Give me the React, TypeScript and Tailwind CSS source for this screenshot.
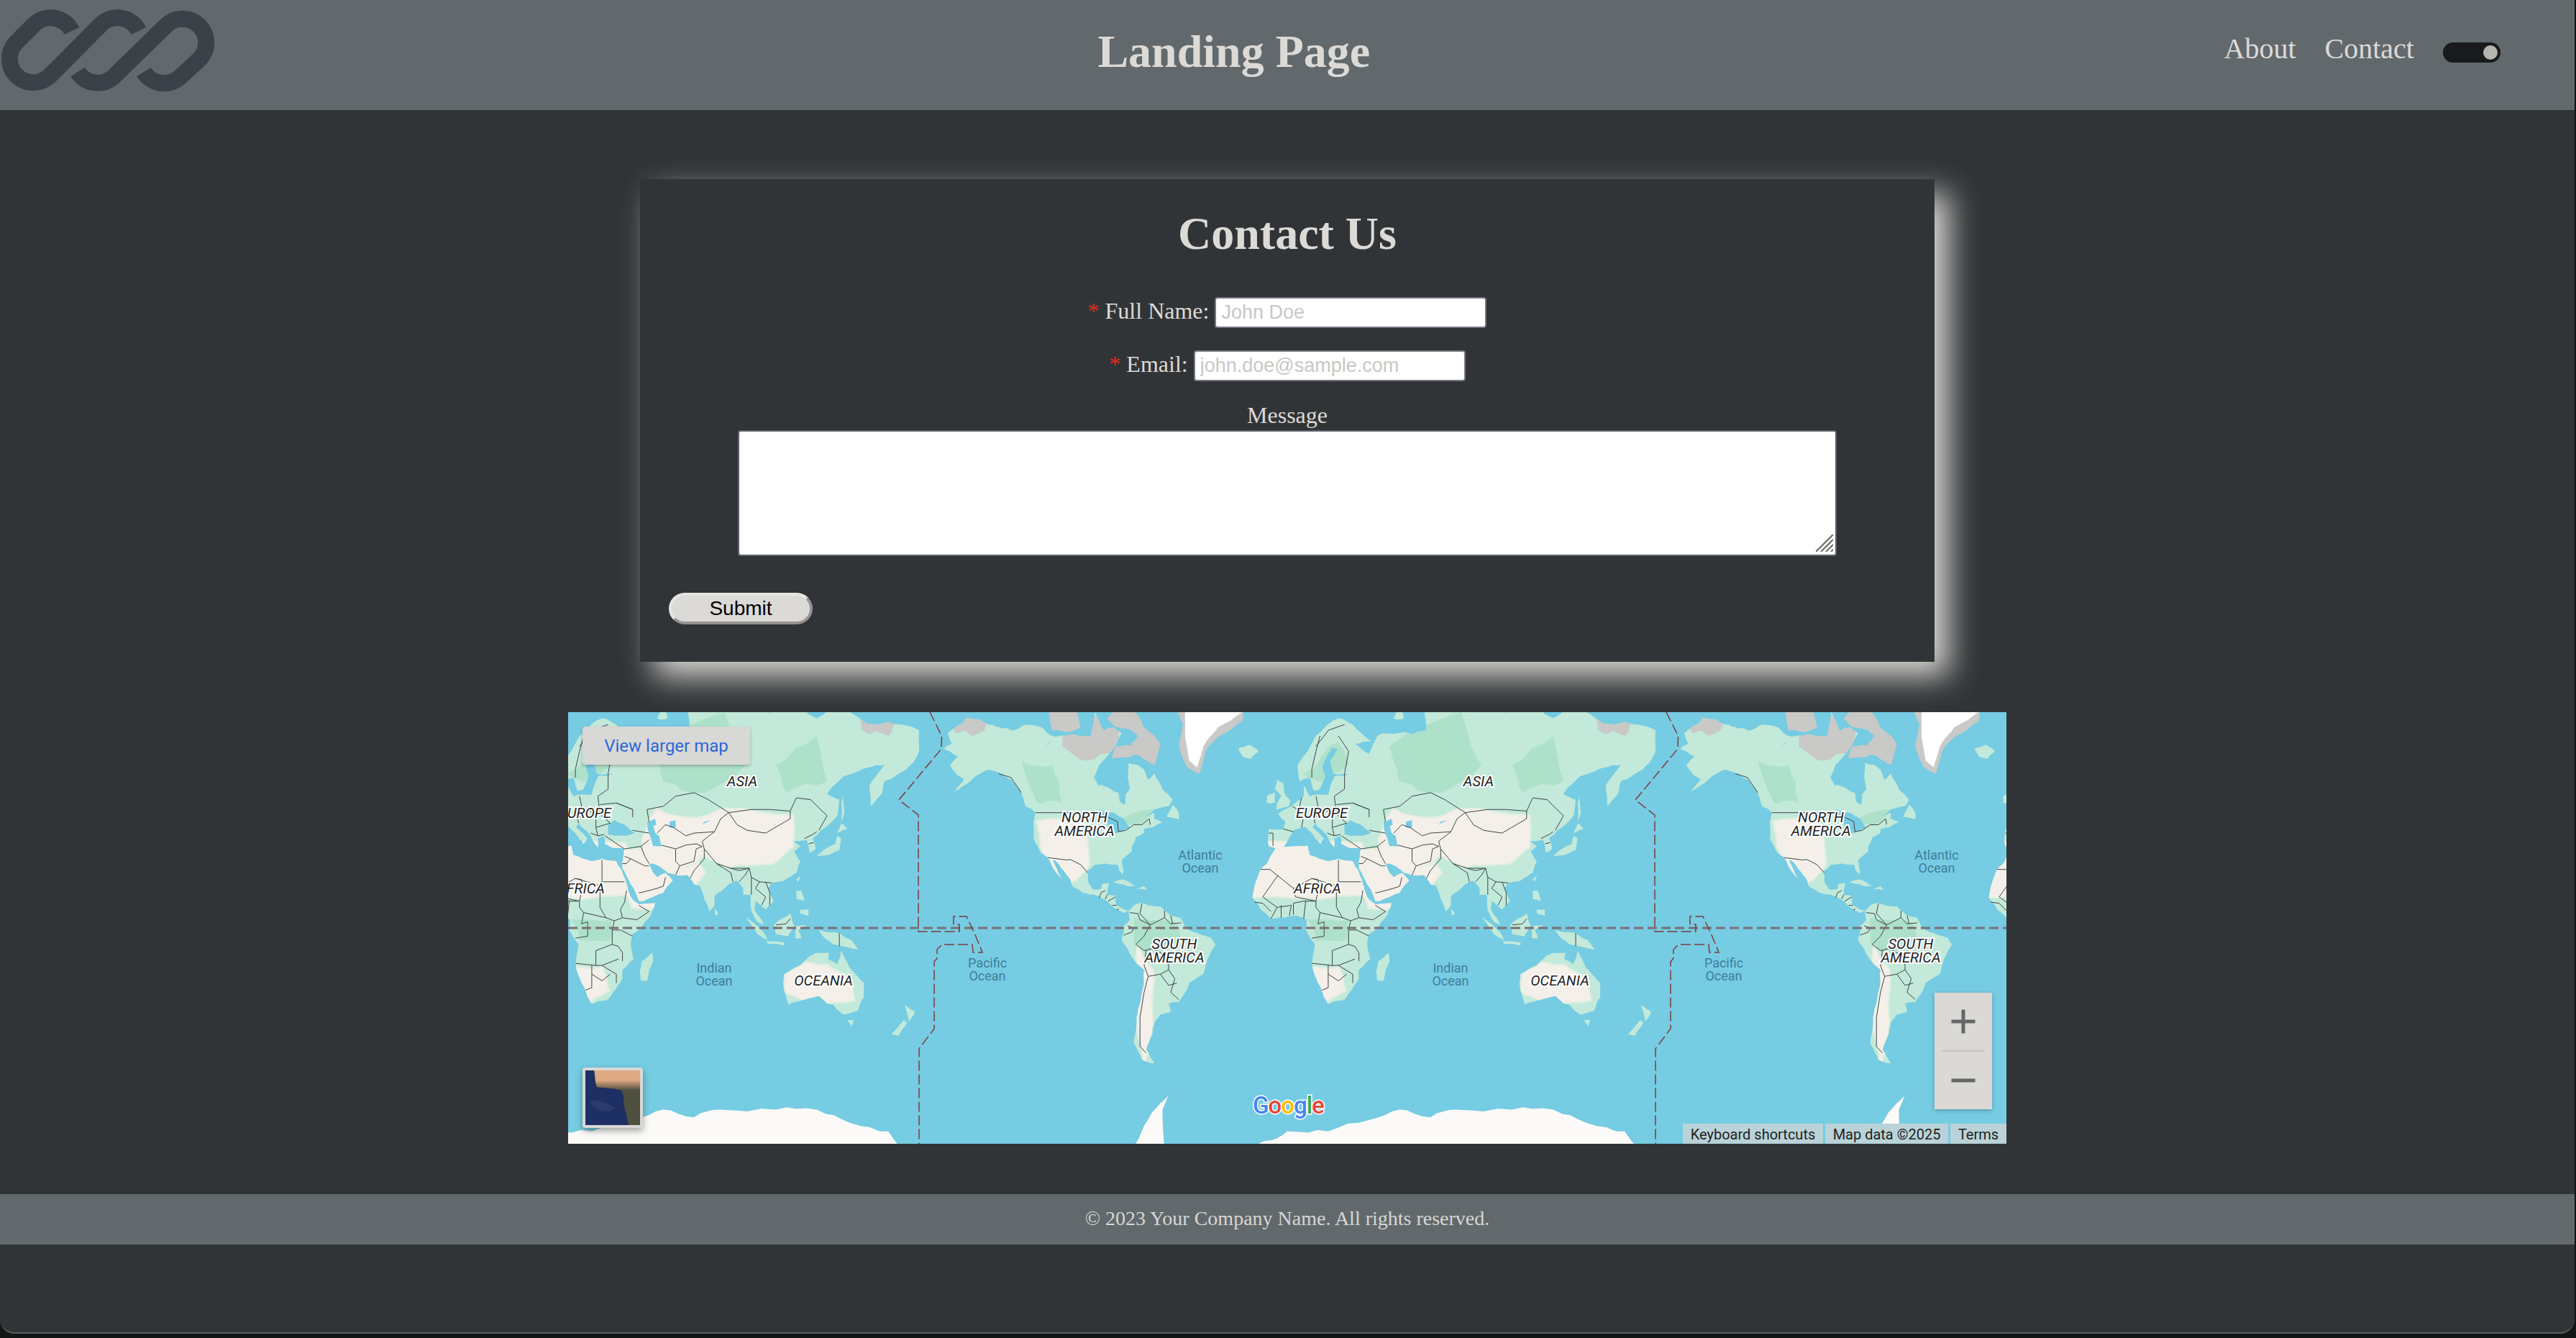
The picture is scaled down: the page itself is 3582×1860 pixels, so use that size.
const toPoint = ([lon, lat]: number[]) => {
  const x = 1000 + (lon / 360) * 1024;
  const clamped = Math.max(-85, Math.min(85, lat));
  const y = 300 - (Math.log(Math.tan(Math.PI / 4 + (clamped * Math.PI) / 360)) * 1024) / (2 * Math.PI);
  return `${x.toFixed(1)},${y.toFixed(1)}`;
};

// small repeatable wobble so the coasts and patches don't look like straight polygons
let seed = 7;
const rnd = () => {
  seed = (seed * 16807) % 2147483647;
  return seed / 2147483647 - 0.5;
};
const rough = (pts: number[][], amount: number, rounds = 2) => {
  let out = pts;
  for (let r = 0; r < rounds; r++) {
    const next: number[][] = [];
    out.forEach((p, i) => {
      const q = out[(i + 1) % out.length];
      const len = Math.min(10, Math.hypot(q[0] - p[0], q[1] - p[1]));
      next.push(p);
      next.push([(p[0] + q[0]) / 2 + rnd() * len * amount, (p[1] + q[1]) / 2 + rnd() * len * amount]);
    });
    out = next;
  }
  return out;
};
const poly = (pts: number[][]) => "M" + pts.map(toPoint).join("L") + "Z";
const line = (pts: number[][]) => "M" + pts.map(toPoint).join("L");
const roughPaths = (list: number[][][], amount: number) => list.map((p) => poly(rough(p, amount))).join("");

const land: number[][][] = [
  // north america
  [[-168,65.5],[-164,66.5],[-166,68.5],[-157,71],[-148,70.3],[-141,69.6],[-135,69],[-128,70],[-120,69.5],[-115,68],[-108,68],[-100,68],[-96,68],[-94,72],[-90,69],[-85,69.5],[-81,68.5],[-87,64.5],[-92,62],[-94.5,59],[-92.5,57],[-88,56.5],[-82.5,55],[-82,52.5],[-79.5,51.5],[-79,54.5],[-77,56],[-78,59],[-77.5,62.5],[-73,62],[-70,61],[-68,58.5],[-65,60],[-61,56],[-56,53],[-58,51],[-65,50],[-69,48],[-65,49],[-65,47],[-61,46],[-66,44],[-70,43.5],[-70,42],[-74,40.5],[-76,37],[-76,35],[-81,31.5],[-80,27],[-80.5,25],[-82,27],[-83,29.5],[-89,30],[-94,29.5],[-97.5,27],[-97.5,22],[-95,18.5],[-91,18.7],[-90.5,21],[-87,21.5],[-88,16],[-84,15.5],[-83.5,11],[-80,9],[-77.5,8.5],[-80,7.3],[-85,10],[-88,13],[-94,16],[-100,17],[-105,20],[-106,23],[-110,27.5],[-113,31],[-114.7,31.5],[-112,26],[-110,23],[-112,25],[-115,29],[-117,32.5],[-120.5,34.5],[-124,40],[-124,46],[-123,49],[-128,51],[-130,55],[-135,58.5],[-140,60],[-146,61],[-150,60],[-152,59.5],[-158,57],[-164,54.7],[-158,58.5],[-162,60],[-165,62],[-161,64]],
  // south america
  [[-77.5,8.5],[-75,11],[-71.5,12.3],[-68,11],[-62,10.5],[-57,6],[-52,5],[-50,0],[-44,-2.5],[-37,-5],[-35,-8],[-39,-15],[-41,-22],[-48,-26],[-49,-29],[-53,-34],[-58,-34.5],[-57,-38],[-62,-39],[-65,-42],[-66,-46],[-69,-51],[-65,-55],[-71,-54],[-75,-49],[-73.5,-42],[-73,-37],[-71,-30],[-70,-20],[-76,-14],[-81,-6],[-80,-2],[-80,1],[-77,4]],
  // africa
  [[-6,35.8],[3,37],[10,37.3],[11,33.5],[20,31],[25,32],[32,31],[34,28],[37,21],[39,15],[43,11.5],[51,12],[48,5],[40,-3],[39,-8],[40.5,-15],[35,-20],[35,-24],[32.8,-27],[28,-33],[20,-34.8],[18,-32],[15,-26],[12,-17],[13.5,-8],[9,-1],[9.5,4],[4,6],[-4,5],[-8,4.5],[-13,9],[-17,14.7],[-16,20],[-13,27.5],[-10,30]],
  // eurasia
  [[-9,37],[-9.5,39],[-9,43.5],[-2,43.5],[-1,46],[-4.5,48.5],[2,51],[8,54],[8,57],[11,54],[20,54.5],[23,59.3],[30,60],[22.5,60],[21,63],[25,65.5],[22,65.8],[17,61.5],[18.5,59.5],[16,56],[13,55.5],[11,59],[6,58],[5,62],[14,68],[25,71],[32,70],[41,67],[33,66.5],[40,64.5],[44,68],[54,68.5],[68,69],[67,72],[73,72],[80,72],[90,72],[105,77],[113,74],[130,71],[140,72.5],[160,70],[170,70],[180,69],[180,65],[177,62.5],[170,60],[163,58],[162,55],[156.5,51],[155.7,57],[163,62],[156,61.5],[143,59.3],[135,54.7],[141,53],[140,48],[132,43],[128,40],[129.5,36],[126.5,34.5],[126,37],[125,39.5],[121,39],[118,39],[122,37],[119,35],[122,31],[120,26],[114,22.5],[108,21.5],[106,19],[109,13],[105,9],[100,13],[99.5,9],[103,4],[104,1.5],[101,3],[98,8.5],[97.5,16],[94,16],[94,19],[91,22.5],[87,21],[80,15.5],[80,11],[77.5,8],[73,20],[70,21],[67,25],[61,25],[57,26],[56,27],[50,30],[48,30],[50,26],[52,24],[56,26],[59.5,22.5],[55,17],[45,13],[43,13],[39,21],[35,28],[35,31],[36,36],[30,36.5],[26.5,38],[26,40.8],[23,40],[23,36.5],[19.5,41],[13.5,45.5],[12.5,44],[18,40],[16,38],[12,42],[8.5,44.3],[3.5,43.2],[0,39],[-2,36.7],[-5.5,36]],
  // islands
  [[-5.5,50],[1,51.2],[1.5,52.8],[-1.5,55],[-2,57.5],[-5,58.5],[-6,56],[-3,54],[-5,52]],
  [[-10,52],[-6,52],[-6,55],[-10,54]],
  [[-24,65.5],[-18,66.3],[-14,65],[-18,63.4],[-22,64]],
  [[-59,47.7],[-53,46.8],[-53,49],[-56,51.5]],
  [[-85,22],[-80,23],[-74,20],[-78,20]],
  [[-74,18.5],[-68.5,18.5],[-70,20]],
  [[130,33],[135,33.5],[141,35.5],[142,40],[140,41],[139,38],[133,35.5]],
  [[140,42],[145,43.5],[142,45.5]],
  [[142,46],[143.5,49],[143,54],[142,52]],
  [[120,23],[122,25],[121,22]],
  [[120,18],[122.5,18],[124,13],[120,14]],
  [[122,9],[126,9],[126,6],[122,7]],
  [[95,5.5],[104,-2],[106,-6],[101,-3]],
  [[105.5,-6.5],[114,-7],[114,-8.5],[106,-7.7]],
  [[109,1.5],[117,7],[119,1],[116,-4],[110,-3]],
  [[120,1],[125,1.3],[121,-1],[122.5,-5],[119.5,-5]],
  [[131,-1],[141,-2.5],[147,-6],[150.5,-10.5],[143,-9],[138,-8],[133,-4]],
  [[114,-22],[122,-18],[126,-14],[130,-12],[136,-12],[135.5,-15],[140,-17.5],[142,-11],[146,-19],[153,-26],[153,-32],[150,-37.5],[143,-39],[138,-35],[135,-34.5],[131,-31.5],[124,-33],[116,-35],[115,-32],[113.5,-26]],
  [[145,-41],[148,-41],[147,-43.5]],
  [[173,-35],[178,-38],[175,-41.5],[174,-38]],
  [[172.5,-41],[174,-42],[170,-46.5],[166.5,-46]],
  [[49.5,-12],[50,-16],[47,-25],[44,-25],[43.5,-21],[44.5,-16]],
  [[80,9.5],[82,7],[80.5,6]],
  [[52,71],[56,73.5],[57,71]],
];

const grey: number[][][] = [
  [[-80,74],[-72,71],[-62,66.5],[-65,62],[-72,64],[-78,65],[-73,68],[-88,71]],
  [[-117,73],[-105,74],[-101,69.5],[-115,69]],
  [[-125,72],[-118,75],[-116,72]],
  [[-100,75],[-92,75],[-90,72.5],[-98,72]],
  [[-84,66],[-73,66],[-76,64],[-86,63.5]],
];

const seas: number[][][] = [
  [[28,41.5],[28,45],[31,46.5],[36,45],[41,42],[37,41],[31,41]],
  [[47,46],[51,47],[51.5,45],[50,44.5],[51,42],[53,41],[54,37],[50,37],[49,40],[47.5,43]],
  [[-92,50],[-85,49],[-80,47],[-77,43.8],[-83,42],[-87,42],[-88,46]],
  [[58,46],[61,46.5],[61,44],[58,44]],
  [[-118,66],[-116,67],[-120,65]],
  [[78,46.5],[75,46],[74,45]],
];

const beige: number[][][] = [
  [[-20,38],[36,38],[50,15],[30,16],[10,15],[-20,15]],
  [[34,35],[60,35],[60,10],[40,10]],
  [[52,50],[70,47],[85,50],[118,48],[118,37],[108,30],[100,30],[85,29],[75,34],[62,27],[45,28],[45,40]],
  [[115,-22],[125,-17],[135,-18],[146,-24],[148,-33],[130,-36],[115,-30]],
  [[-122,46],[-100,48],[-97,30],[-106,22],[-118,30]],
  [[-73,-10],[-66,-20],[-66,-42],[-70,-55],[-75,-40],[-73,-20]],
  [[12,-19],[25,-19],[28,-29],[16,-35]],
  [[60,26],[72,30],[75,26],[70,20]],
];

const deep: number[][][] = [
  [[50,66],[85,72],[95,62],[75,55],[55,58]],
  [[-75,5],[-55,3],[-52,-5],[-65,-12],[-75,-8]],
  [[10,4],[30,4],[30,-5],[14,-6]],
  [[-130,63],[-115,62],[-110,52],[-122,52]],
  [[110,62],[130,68],[135,58],[115,55]],
  [[-84,46],[-65,50],[-70,46],[-82,44]],
  [[8,60],[25,67],[30,62],[15,58]],
];

const iceGrey: number[][][] = [
  [[-110,72],[-80,72],[-85,64],[-98,63],[-110,66]],
  [[-168,72],[-145,72],[-148,69],[-162,68.5]],
  [[92,78],[108,78],[112,73],[96,72]],
  [[150,73],[170,72],[165,68],[152,69]],
];

const borders: number[][][] = [
  [[-123,49],[-95,49],[-89,48],[-83,46],[-82.5,42.5],[-79,43],[-75,45],[-71,45],[-67.5,47],[-67,45]],
  [[-130,55],[-135,59],[-141,60]],
  [[-117,32.5],[-108,31.5],[-106,31.7],[-101,29.5],[-97.5,26]],
  [[-92,14.5],[-91,17],[-89,18]],[[-89,14],[-88,16]],[[-87.5,13],[-84,15]],[[-85.5,11],[-83.5,11]],[[-83,8.5],[-82.5,9.5]],
  // south america
  [[-77,7.5],[-73,7],[-72,4],[-67,1.5],[-70,-4],[-74,-8],[-70,-11],[-66,-10],[-60,-13],[-58,-18],[-58,-20]],
  [[-80,-3.5],[-76,-2],[-75,0],[-78,1]],[[-71,12],[-72,7],[-67,1.5],[-60,5],[-60,8.5]],[[-60,5],[-57,2],[-52,2.5]],[[-57,6],[-56,2]],
  [[-70,-18],[-69,-11]],[[-70,-18],[-68,-23],[-70,-30],[-72,-40],[-72,-50],[-69,-52]],[[-68,-23],[-62,-22],[-58,-20],[-55,-24],[-57,-30],[-53,-33]],[[-62,-22],[-58,-27],[-54,-26]],
  // africa
  [[-8.5,27.5],[-13,27.5]],[[-8.5,27.5],[3,19],[12,23.5],[25,20],[25,31.5]],[[25,22],[36,22]],[[-4.5,25],[-12,15]],[[3,19],[4,15],[14,13]],[[12,23.5],[15,23],[15.5,20],[14,13],[8,13],[3,12],[3,6.5]],[[14,13],[14,10],[16,7.5],[27,5],[31,3.5],[35,5],[42,4],[48,8],[43,11]],[[24,20],[24,10],[27,5]],[[37,18],[36,12.5],[34,9],[35,5]],[[16,7.5],[15,2],[18,3],[18,-4],[12,-5]],[[30,-1],[30,-8],[22,-11],[22,-18],[12,-17]],[[31,3.5],[30,-1],[34,-1],[40,-4]],[[30,-8],[33,-9],[35,-12],[35,-16]],[[22,-18],[25,-18],[33,-15]],[[25,-18],[32,-22],[32,-26]],[[20,-18],[20,-28],[17,-29]],[[20,-22],[25,-25],[29,-22]],[[-12,15],[-5,10],[-8,4.5]],[[-5,10],[2,11],[1,6]],[[-12,12],[-8,8]],[[-16,12.5],[-12,12]],[[8,4.5],[9,13]],[[-3,5],[-3,11]],
  // europe
  [[-9,42],[-7,42],[-7,37.2]],[[-2,43.5],[3,42.5]],[[2.5,51],[6,49.5],[8,48],[7,44]],[[6,51],[7,53.5]],[[8,48],[13,47.5],[17,48]],[[14,54],[15,51],[19,49.5],[24,48.5],[23,54],[28,56],[28,60]],[[13,47.5],[13.5,45.5]],[[24,48.5],[29,45.5]],[[17,48],[22,48],[22,44],[23,41]],[[29,45.5],[22,44]],[[19.5,42],[23,41],[26,41.5]],[[32,52],[24,51.5]],[[40,50],[32,52]],[[14,66],[18,68],[20,69],[28,70]],[[12,59],[12,61],[14,65],[16,68]],[[25,68],[30,65],[28,60]],
  // russia and central asia
  [[32,52],[40,50],[40,47.5]],[[40,43],[48,42]],[[48,46],[47,50],[55,51],[61,54],[70,55],[77,53],[87,49],[98,50],[107,50],[117,49.5],[120,53.5],[127,53],[135,48],[131,43]],[[87,49],[91,45],[96,43],[105,42],[112,45],[117,47],[117,49.5]],[[52,42],[56,45],[60,44],[66,41],[70,42],[80,42.5],[83,47],[87,49]],[[80,42.5],[74,39],[75,36],[79,32],[81,30],[88,28],[97,28],[98,24],[102,22],[108,21.5]],[[54,37.5],[61,36],[66,37.5],[71,38],[74,37]],[[61,25],[63,29],[61,31],[61,36]],[[63,29],[70,31],[71,36],[74,37]],[[75,36],[75,32],[70,27],[68,23.5]],[[81,30],[88,26],[89,22]],[[88,28],[92,27],[97,28]],[[92,22],[95,25],[97,28]],[[98,24],[98,16]],[[102,22],[100,19],[105,15],[103,11]],[[105,22],[107,17],[107,11]],
  // middle east
  [[44,37],[46,33],[48,30]],[[36,36],[44,37],[48,39.5]],[[26.5,41],[36,36]],[[36,33],[39,32],[46,29],[48,29]],[[35,30],[37,30],[39,32]],[[44,17],[52,19],[55,20],[56,24]],[[43,17],[44,17]],[[124,40],[128,41.5],[130,42.5]],[[126,38],[128.5,38.5]],[[141,-2.5],[141,-9]],[[117,4.5],[115,2],[110,1.5]],
];

const dateLineAbs = [[2317,990],[2333.5,1023],[2333,1041],[2274,1112],[2301,1133],[2301,1295],[2358,1295],[2358,1285],[2350,1285],[2350,1274],[2368,1274],[2381,1302],[2390,1324],[2377,1324],[2376,1313],[2334,1313],[2327,1320],[2327,1332],[2323,1337],[2323,1430],[2302,1458],[2302,1590]];
const dateLinePath = "M" + dateLineAbs.map(([x, y]) => `${x - 790},${y - 990}`).join("L");

const landPath = roughPaths(land, 0.1);
const greyPath = roughPaths(grey, 0.14);
const icePath = roughPaths(iceGrey, 0.2);
const deepPath = roughPaths(deep, 0.22);
const beigePath = roughPaths(beige, 0.16);
const seaPath = roughPaths(seas, 0.08);
const greenlandOuter = poly(rough([[-73,78],[-60,82],[-30,83],[-18,78],[-22,70.5],[-33,68],[-40,65],[-43,60],[-49,61.5],[-53,66],[-51,70],[-58,75.5],[-68,76]], 0.08));
const greenlandInner = poly(rough([[-70,78],[-30,80],[-22,72],[-34,69.5],[-41,66],[-44,61.5],[-48,63],[-50,68],[-50,72],[-56,76]], 0.08));
const antarctica = poly(rough([[-180,-85],[-180,-76],[-76,-76],[-76,-73],[-70,-69],[-66,-66.5],[-58,-63],[-61,-66],[-60,-73],[-60,-77],[-18,-77],[-18,-73],[-10,-71.5],[0,-70],[20,-70],[40,-68],[55,-66],[70,-67.5],[82,-66],[110,-66],[130,-66],[146,-68.5],[165,-70],[171,-72.5],[175,-77],[180,-77],[180,-85]], 0.08));

const labels = [
  { x: 1266, y: 103, lines: ["ASIA"] },
  { x: 1048, y: 147, lines: ["EUROPE"] },
  { x: 1042, y: 252, lines: ["AFRICA"] },
  { x: 718, y: 153, lines: ["NORTH", "AMERICA"] },
  { x: 843, y: 329, lines: ["SOUTH", "AMERICA"] },
  { x: 1379, y: 380, lines: ["OCEANIA"] },
];
const oceans = [
  { x: 879, y: 205, lines: ["Atlantic", "Ocean"] },
  { x: 1227, y: 362, lines: ["Indian", "Ocean"] },
  { x: 583, y: 355, lines: ["Pacific", "Ocean"] },
];

function World() {
  return (
    <g>
      <path d={landPath} fill="#c2e9da" />
      <path d={greyPath} fill="#c9c9c7" />
      <g clipPath="url(#landClip)">
        <path d={icePath} fill="#c9c9c7" />
        <path d={deepPath} fill="#aee1c9" />
        <path d={beigePath} fill="#f4f0e9" stroke="#e4eee0" strokeWidth="5" paintOrder="stroke" />
      </g>
      <path d={seaPath} fill="#76cce2" />
      <path d={greenlandOuter} fill="#c9c9c7" />
      <path d={greenlandInner} fill="#ffffff" />
      <path d={antarctica} fill="#fbfaf8" />
      <path d={borders.map(line).join("")} fill="none" stroke="#3f4548" strokeWidth="1" />
    </g>
  );
}

function MapLabels() {
  return (
    <g style={{ fontFamily: "Roboto, sans-serif" }}>
      {labels.map((l) =>
        l.lines.map((t, i) => (
          <text key={l.x + t} x={l.x} y={l.y + i * 19} textAnchor="middle" fontSize="20" fontStyle="italic" fill="#222222" stroke="#ffffff" strokeWidth="4" paintOrder="stroke">
            {t}
          </text>
        ))
      )}
      {oceans.map((l) =>
        l.lines.map((t, i) => (
          <text key={l.x + t} x={l.x} y={l.y + i * 18} textAnchor="middle" fontSize="18" fill="#3f7d9a">
            {t}
          </text>
        ))
      )}
    </g>
  );
}

function WorldMap() {
  return (
    <svg className="block w-full h-full" viewBox="0 0 2000 600">
      <defs>
        <clipPath id="landClip">
          <path d={landPath} />
        </clipPath>
      </defs>
      <rect width="2000" height="600" fill="#76cce2" />
      <g transform="translate(-1024 0)">
        <World />
        <MapLabels />
      </g>
      <g>
        <World />
        <MapLabels />
      </g>
      <g transform="translate(1024 0)">
        <World />
        <MapLabels />
      </g>
      <line x1="0" y1="300" x2="2000" y2="300" stroke="#7a6f73" strokeWidth="3" strokeDasharray="13 6" />
      <g fill="none" stroke="#7d3a3e" strokeWidth="1.5" strokeDasharray="14 5">
        <path d={dateLinePath} />
        <path d={dateLinePath} transform="translate(-1024 0)" />
      </g>
      {/* google logo */}
      <text x="952" y="558" fontSize="33" fontWeight="500" stroke="#ffffff" strokeWidth="3" paintOrder="stroke" letterSpacing="-1" style={{ fontFamily: "Roboto, sans-serif" }}>
        <tspan fill="#4285f4">G</tspan>
        <tspan fill="#ea4335">o</tspan>
        <tspan fill="#fbbc05">o</tspan>
        <tspan fill="#4285f4">g</tspan>
        <tspan fill="#34a853">l</tspan>
        <tspan fill="#ea4335">e</tspan>
      </text>
    </svg>
  );
}

function Logo() {
  return (
    <svg className="block" width="300" height="153" viewBox="0 0 300 153" fill="none" stroke="#3b4149" strokeWidth="23">
      <path d="M100,43 A33 33 0 0 0 46.7,34.7 L21.7,59.7 A33 33 0 0 0 68.3,106.3 L139.7,34.7 A33 33 0 0 1 193,43" />
      <path d="M108,100 A33 33 0 0 0 158.3,106.3 L231.7,34.7 A33 33 0 0 1 278.3,81.3 L251.3,106.3 A33 33 0 0 1 200,100" />
    </svg>
  );
}

function FormRow({ label, placeholder }: { label: string; placeholder: string }) {
  return (
    <label className="h-[43px] mb-[31px] flex items-baseline justify-center gap-[8px] text-[32px] leading-none">
      <span>
        <span className="text-[#e8281c]">* </span>
        {label}
      </span>
      <input
        className="w-[378px] h-[43px] bg-white border-2 border-[#767682] rounded-[4px] px-[7px] text-[27px] text-black placeholder:text-[#c9c7c4] font-['Liberation_Sans',sans-serif]"
        placeholder={placeholder}
      />
    </label>
  );
}

export default function App() {
  return (
    <div className="h-[1860px] bg-[#141515] overflow-hidden">
      <div className="w-[3580px] h-[1854px] bg-[#313437] rounded-b-[20px] border-b-2 border-[#5c5f60] overflow-hidden font-['Liberation_Serif',serif] text-[#dcdad6] flex flex-col">
        <header className="shrink-0 h-[153px] bg-[#62696d] flex items-center justify-between pr-[103px]">
          <Logo />
          <h1 className="text-[64px] font-bold leading-none ml-[39px] mb-[10px]">Landing Page</h1>
          <nav className="flex items-center gap-[40px] text-[40px] leading-none mb-[18px]">
            <a href="#">About</a>
            <a href="#">Contact</a>
            <div className="w-[80px] h-[28px] rounded-full bg-[#181a1c] flex items-center justify-end pr-[4px] mt-[10px]">
              <div className="w-[20px] h-[20px] rounded-full bg-[#b6b4ae]" />
            </div>
          </nav>
        </header>

        <main className="flex flex-col items-center pt-[96px]">
          <form className="w-[1800px] h-[671px] bg-[#313437] shadow-[20px_20px_40px_#d8d7d3] flex flex-col px-[40px]">
            <h2 className="text-[64px] font-bold leading-none text-center mt-[44px] mb-[56px]">Contact Us</h2>
            <FormRow label="Full Name:" placeholder="John Doe" />
            <FormRow label="Email:" placeholder="john.doe@sample.com" />
            <div className="text-[32px] leading-none text-center mb-[5px]">Message</div>
            <div className="relative w-[1528px] h-[175px] mx-auto">
              <textarea className="block w-full h-full resize-none bg-white border-2 border-[#62626e] rounded-[4px]" />
              <svg className="absolute right-[5px] bottom-[6px]" width="24" height="24" viewBox="0 0 24 24" fill="none" stroke="#666666" strokeWidth="2">
                <path d="M0,24 L24,0 M7,24 L24,7 M14,24 L24,14 M21,24 L24,21" />
              </svg>
            </div>
            <button
              type="button"
              className="mt-[51px] w-[200px] h-[44px] rounded-full bg-[#dbdad7] text-black text-[28px] leading-none font-['Liberation_Sans',sans-serif] border-[4px] border-t-[#e6e5e3] border-l-[#e6e5e3] border-r-[#949391] border-b-[#949391]"
            >
              Submit
            </button>
          </form>

          <div className="relative w-[2000px] h-[600px] mt-[70px] overflow-hidden font-['Roboto',sans-serif]">
            <WorldMap />
            <a href="#" className="absolute left-[20px] top-[20px] w-[233px] h-[53px] rounded-[4px] bg-[#d8d8d6] shadow-[0_2px_4px_rgba(0,0,0,0.25)] text-[#2a68d8] text-[24px] flex items-center justify-center">
              View larger map
            </a>
            <div className="absolute left-[20px] top-[494px] w-[84px] h-[84px] rounded-[4px] border-[4px] border-[#d8d8d6] shadow-[0_4px_10px_rgba(0,0,0,0.35)] overflow-hidden">
              <svg className="block w-full h-full" viewBox="0 0 76 76">
                <defs>
                  <linearGradient id="thumbLand" x1="0" y1="0" x2="0" y2="1">
                    <stop offset="0.18" stopColor="#dfa983" />
                    <stop offset="0.36" stopColor="#4f503f" />
                  </linearGradient>
                </defs>
                <rect width="76" height="76" fill="#1e2f63" />
                <path d="M12,0 H76 V76 H60 C58,66 56,58 54,50 C53,42 54,34 50,28 C40,24 26,25 16,23 C13,16 14,8 12,0 Z" fill="url(#thumbLand)" />
                <path d="M6,44 C18,38 30,46 42,52 C34,60 14,58 6,44 Z" fill="#2b3b6e" />
              </svg>
            </div>
            <div className="absolute left-[1900px] top-[390px] w-[80px] h-[162px] bg-[#dad9d6] shadow-[0_2px_6px_rgba(0,0,0,0.25)] flex flex-col items-center">
              <svg className="block" width="80" height="80" viewBox="0 0 80 80">
                <path d="M23.500,40 H56.500 M40,23.500 V56.500" stroke="#666666" strokeWidth="5" />
              </svg>
              <div className="w-[60px] h-[2px] bg-[#c3c2bf]" />
              <svg className="block" width="80" height="80" viewBox="0 0 80 80">
                <path d="M23.500,40 H56.500" stroke="#666666" strokeWidth="5" />
              </svg>
            </div>
            <div className="absolute right-0 bottom-0 h-[28px] flex gap-[3px] text-[20px] leading-[30px] text-[#222222]">
              <span className="w-[195px] text-center bg-[#b9d3d8]">Keyboard shortcuts</span>
              <span className="w-[171px] text-center bg-[#b9d3d8]">Map data ©2025</span>
              <span className="w-[78px] text-center bg-[#b9d3d8]">Terms</span>
            </div>
          </div>
        </main>

        <footer className="shrink-0 mt-[70px] h-[70px] bg-[#62696d] flex items-center justify-center text-[28px] pb-[3px] text-[#d8d7d3]">
          © 2023 Your Company Name. All rights reserved.
        </footer>
      </div>
    </div>
  );
}
